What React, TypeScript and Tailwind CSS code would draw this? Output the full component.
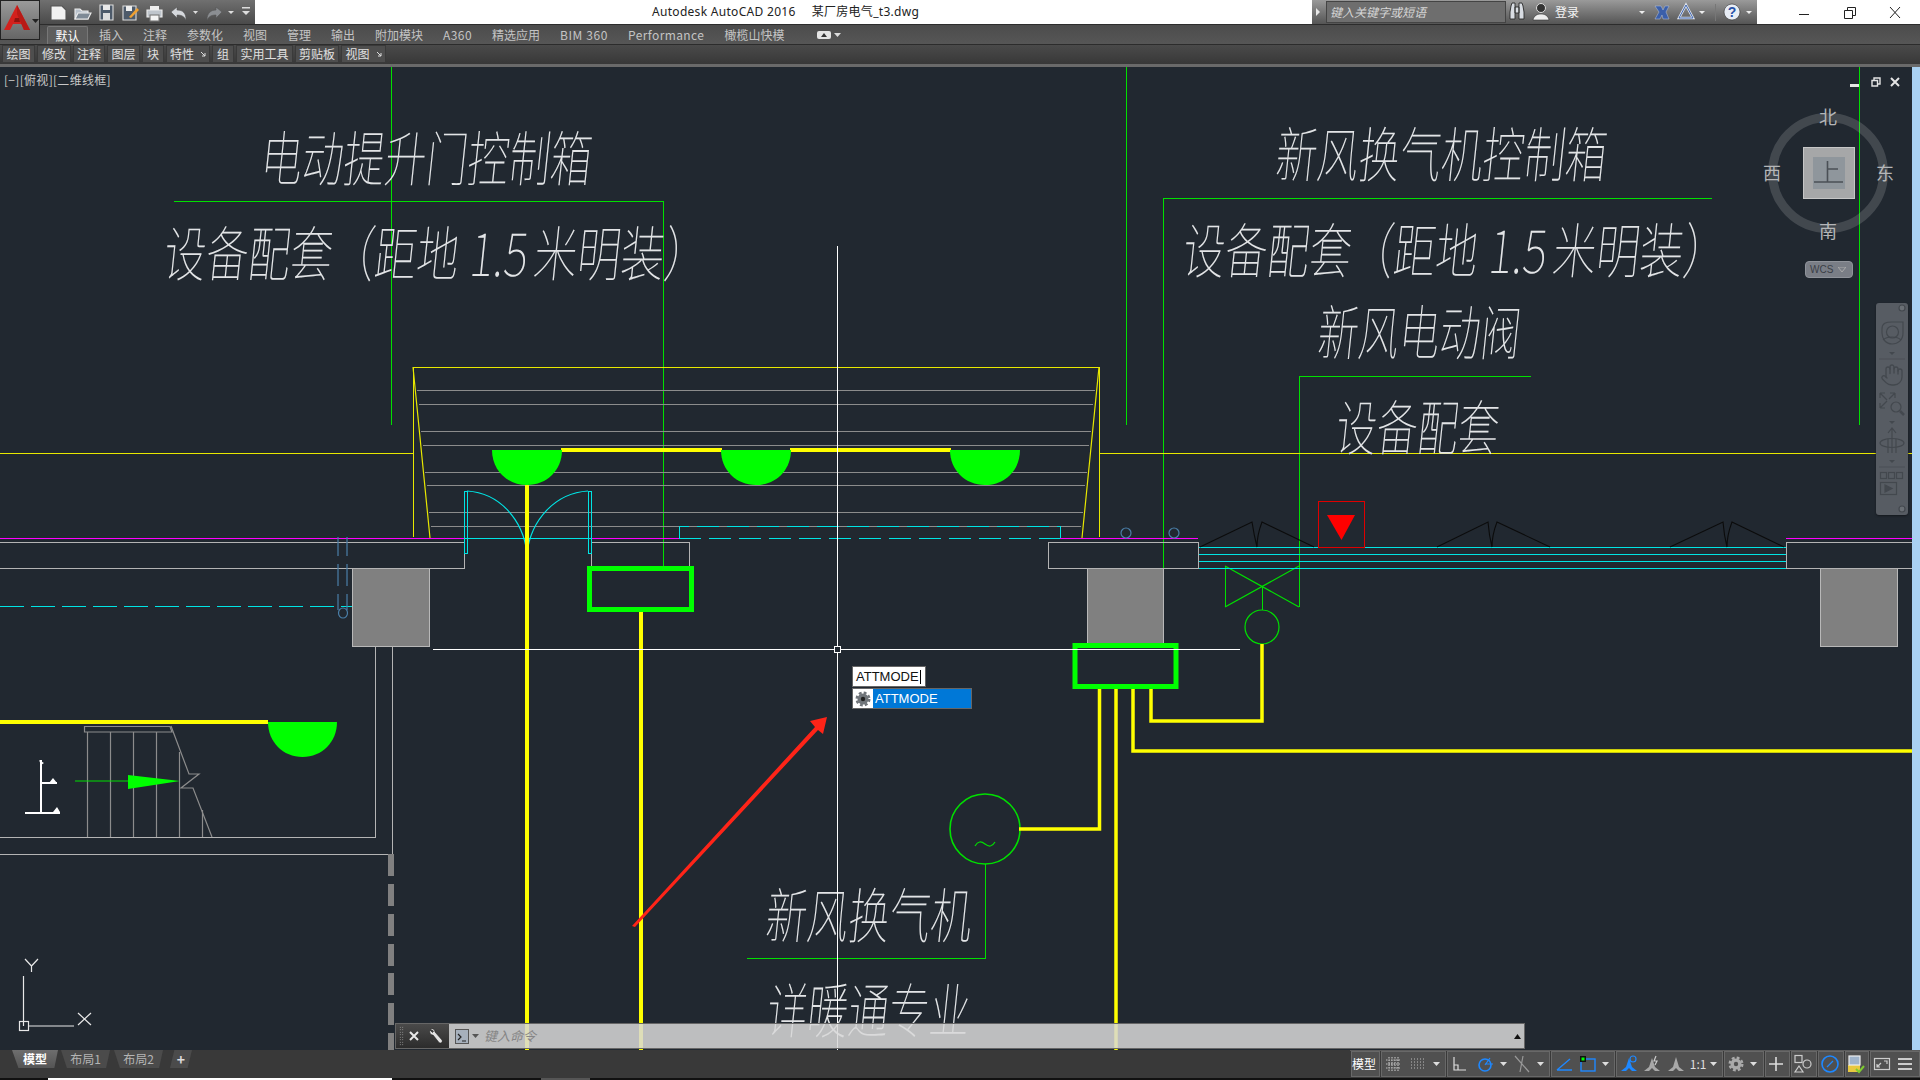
import { Hand } from "lucide-react";

const tabs = [
  { label: "插入" },
  { label: "注释" },
  { label: "参数化" },
  { label: "视图" },
  { label: "管理" },
  { label: "输出" },
  { label: "附加模块" },
  { label: "A360", cls: "tracking-[0.4px]" },
  { label: "精选应用" },
  { label: "BIM 360", cls: "tracking-[0.6px]" },
  { label: "Performance", cls: "tracking-[0.4px]" },
  { label: "橄榄山快模" },
];

const panels = [
  { label: "绘图", w: "w-[33px]" },
  { label: "修改", w: "w-[34px]" },
  { label: "注释", w: "w-[32px]" },
  { label: "图层", w: "w-[33px]" },
  { label: "块", w: "w-[22px]" },
  { label: "特性", w: "w-[44px]", arrow: true },
  { label: "组", w: "w-[22px]" },
  { label: "实用工具", w: "w-[57px]" },
  { label: "剪贴板", w: "w-[44px]" },
  { label: "视图", w: "w-[45px]", arrow: true },
];

const stairY = [390, 404, 431, 445, 472, 485, 512, 526];
const lamps = [492, 721, 950];
const black = [
  [1200, 1252, 1257, 1262, 1314],
  [1437, 1488, 1492, 1497, 1550],
  [1670, 1723, 1727, 1732, 1784],
];
const legDashes = [854, 884, 914, 944, 973, 1003, 1033];

const Caret = ({ color = "#ddd" }: { color?: string }) => (
  <svg width="7" height="4" viewBox="0 0 7 4" className="shrink-0">
    <path d="M0 0h7L3.5 4z" fill={color} />
  </svg>
);

const CadText = ({ x, y, w, size = 60, children }: { x: number; y: number; w: number; size?: number; children: string }) => (
  <text
    transform={`translate(${x} ${y}) skewX(-6)`}
    fontSize={size}
    fontWeight={100}
    fill="#e2e4e6"
    textLength={w}
    lengthAdjust="spacingAndGlyphs"
    fontFamily="'Noto Sans CJK SC', sans-serif"
  >
    {children}
  </text>
);

// 设备配套（距地1.5米明装） spaces the digits wide, so it is set in three runs
const SpecLine = ({ x, y }: { x: number; y: number }) => (
  <>
    <CadText x={x} y={y} w={295}>设备配套（距地</CadText>
    <CadText x={x + 306} y={y} w={58}>1.5</CadText>
    <CadText x={x + 370} y={y} w={174}>米明装）</CadText>
  </>
);

const Wall = ({ x1, x2 }: { x1: number; x2: number }) => (
  <>
    <rect x={x1} y={542} width={x2 - x1} height={26} fill="none" stroke="#b4b4b4" strokeWidth="1" />
    <line x1={Math.max(x1, 0)} x2={x2} y1={538} y2={538} stroke="#ff00ff" strokeWidth="1" />
  </>
);

const Pillar = ({ x, w }: { x: number; w: number }) => (
  <rect x={x} y={568} width={w} height={78} fill="#808080" stroke="#b8b8b8" strokeWidth="1" shapeRendering="crispEdges" />
);

const Drawing = () => (
  <svg width="1912" height="983" viewBox="0 67 1912 983" className="absolute left-0 top-0">
    {/* green leaders */}
    <g stroke="#00e000" strokeWidth="1" fill="none">
      <g shapeRendering="crispEdges">
        <path d="M391 67V425M1126 67V425M1859 67V425" />
        <path d="M174 201H663V568" />
        <path d="M1712 198H1163V646" />
        <path d="M1531 376H1299V607" />
        <path d="M747 958H985V864" />
        <path d="M1262 587V610M1225 566V607" />
      </g>
      <path d="M1225 566L1299 607M1299 566L1225 607" strokeWidth="1.2" />
      <ellipse cx="1262" cy="627" rx="17" ry="17" strokeWidth="1.2" />
      <circle cx="985" cy="829" r="35" strokeWidth="1.6" />
      <path d="M975 846c3-5 6-5 10-2s7 3 10-2" strokeWidth="1.2" />
    </g>

    {/* roller door */}
    <g stroke="#8c8c8c" strokeWidth="1" shapeRendering="crispEdges">
      {stairY.map((y) => {
        const d = ((y - 367) / 171) * 17;
        return <line key={y} x1={415 + d} x2={1097 - d} y1={y} y2={y} />;
      })}
    </g>
    <path d="M413 537V367H1099V537M0 453H413M1099 453H1912" stroke="#e8e800" strokeWidth="1" fill="none" shapeRendering="crispEdges" />
    <path d="M413 367L430 538M1099 367L1082 538" stroke="#e8e800" strokeWidth="1.2" fill="none" />

    {/* window */}
    <path d="M1198 547H1786M1198 554H1786M1198 561H1786M1198 568H1786" stroke="#00e4e4" strokeWidth="1" shapeRendering="crispEdges" />
    {black.map(([a, b, c, d, e]) => (
      <path key={a} d={`M${a} 547L${b} 522Q${c - 3} 535 ${c} 547Q${c} 535 ${d} 522L${e} 547`} fill="none" stroke="#0b0b0b" strokeWidth="1.1" />
    ))}

    <Pillar x={352} w={77} />
    <Pillar x={1087} w={76} />
    <Pillar x={1820} w={77} />
    <g shapeRendering="crispEdges">
      <Wall x1={-4} x2={464} />
      <Wall x1={591} x2={689} />
      <Wall x1={1048} x2={1198} />
      <Wall x1={1786} x2={1920} />
    </g>

    {/* doors */}
    <g stroke="#00e4e4" strokeWidth="1" fill="none">
      <g shapeRendering="crispEdges">
        <path d="M464 538H591M464 491H467V553H464ZM588 491H591V553H588Z" />
        <path d="M679 538V526H1060V538M1049 538H1060" strokeDasharray="22 8" />
        <path d="M679 538H1060" strokeDasharray="22 8" />
        <path d="M0 606H352" strokeDasharray="24 7" />
      </g>
      <path d="M467 491C500 493 523 520 527 553M588 491C555 493 531 520 527 553" strokeWidth="1.2" />
    </g>

    <g stroke="#4a7fa8" strokeWidth="1.2" fill="none">
      <path d="M338 537V556M347 537V556M338 564V586M347 564V586M338 594V610M347 594V610" />
      <ellipse cx="343" cy="613" rx="4.5" ry="5" />
      <ellipse cx="1126" cy="533" rx="5" ry="5" />
      <ellipse cx="1174" cy="533" rx="5" ry="5" />
    </g>

    {/* room outline and stair */}
    <path d="M375 646V837H0M392 646V854H0" stroke="#b4b4b4" strokeWidth="1" fill="none" shapeRendering="crispEdges" />
    {legDashes.map((y) => (
      <rect key={y} x={388} y={y} width={6} height={y === 1033 ? 17 : 22} fill="#808080" />
    ))}
    <g stroke="#8c8c8c" strokeWidth="1.2" fill="none">
      <path d="M84.500 726.500H170L172 732H84.500Z" />
      <path d="M87.500 732V837M110.500 732V837M133.500 732V837M156.500 732V837M179.500 752V837M202.500 810V837" />
      <path d="M171 726L189 774H199L181 788H193L212 837" />
    </g>
    <path d="M75 781H128" stroke="#00e000" strokeWidth="1.2" />
    <path d="M128 775L180 781L128 789Z" fill="#00ff00" />
    <path d="M41 760V813M41 783H57M25 813H60" stroke="#fff" strokeWidth="2" fill="none" />
    <path d="M49 783l4-5 4 5zM53 812l4-5 3 5zM39 760l5 3-3 2z" fill="#fff" />

    {/* electrical */}
    <g stroke="#ffff00" fill="none" strokeWidth="4">
      <path d="M0 722H268M561 450H722M790 450H951" />
      <path d="M527 485V1050M641 612V1050" />
      <path d="M1116 686V1050" strokeWidth="3.500" />
      <path d="M1099.500 686V829H1019" strokeWidth="3.500" />
      <path d="M1133 686V751H1912" strokeWidth="3.500" />
      <path d="M1151 686V721H1262V644" strokeWidth="3.500" />
    </g>
    {lamps.map((x) => (
      <path key={x} d={`M${x} 450H${x + 70}C${x + 70} 470 ${x + 55} 485 ${x + 35} 485C${x + 15} 485 ${x} 470 ${x} 450Z`} fill="#00ff00" />
    ))}
    <path d="M268 722H337C337 742 322 757 302.500 757C283 757 268 742 268 722Z" fill="#00ff00" />
    <rect x="589.500" y="568.500" width="102" height="41" fill="none" stroke="#00ff00" strokeWidth="5" />
    <rect x="1075" y="645.500" width="101" height="41" fill="none" stroke="#00ff00" strokeWidth="5" />

    {/* alarm */}
    <rect x="1318" y="501" width="46" height="46" fill="none" stroke="#e00000" strokeWidth="1" shapeRendering="crispEdges" />
    <path d="M1327 515H1355L1341.500 540Z" fill="#ff0000" />

    {/* red arrow */}
    <path d="M632 926L815 727L810 721L827 717L823 734L818 730L635 927Z" fill="#ff2418" />

    <CadText x={259} y={181} w={331}>电动提升门控制箱</CadText>
    <SpecLine x={162} y={276} />
    <CadText x={1274} y={177} w={331}>新风换气机控制箱</CadText>
    <SpecLine x={1181} y={273} />
    <CadText x={1316} y={355} w={203}>新风电动阀</CadText>
    <CadText x={1334} y={450} w={163}>设备配套</CadText>
    <CadText x={764} y={938} w={206}>新风换气机</CadText>
    <CadText x={765} y={1033} w={203}>详暖通专业</CadText>

    {/* crosshair */}
    <path d="M837 246V1050M433 649H1240" stroke="#fff" strokeWidth="1" shapeRendering="crispEdges" />
    <rect x="834" y="646" width="6" height="6" fill="#212830" stroke="#fff" strokeWidth="1" shapeRendering="crispEdges" />

    {/* UCS icon */}
    <g stroke="#e8e8e8" strokeWidth="1.2" fill="none">
      <path d="M23.500 976V1026M29 1026H74" />
      <rect x="19.500" y="1021.500" width="9" height="9" />
      <path d="M78 1013L91 1025M91 1013L78 1025" />
      <path d="M25 959L31.500 966L38 959M31.500 966V972" />
    </g>

    {/* view cube compass */}
    <circle cx="1828" cy="173" r="55.500" fill="none" stroke="#fff" strokeOpacity="0.15" strokeWidth="9" />
    <rect x="1803.500" y="147.500" width="51" height="51" fill="#a6a7a8" stroke="#c6c6c6" />
    <rect x="1813" y="157" width="32" height="32" fill="#8f969c" />
    <path d="M1827.500 161V182M1827.500 169H1838M1814 182H1843" stroke="#4b5056" strokeWidth="1.6" fill="none" />
    <g fontSize="18" fill="#b4b6b8" textAnchor="middle" fontFamily="'Noto Sans CJK SC', sans-serif">
      <text x="1828" y="124">北</text>
      <text x="1828" y="238">南</text>
      <text x="1772" y="180">西</text>
      <text x="1885" y="180">东</text>
    </g>
  </svg>
);

const NavBar = () => (
  <div className="absolute left-[1876px] top-[236px] h-[212px] w-[32px] rounded-[3px] bg-[#575c63] shadow-[0_1px_2px_#15191e]">
    <svg width="32" height="212" viewBox="0 0 32 212" fill="none" stroke="#43484e" strokeWidth="1.2">
      <circle cx="26" cy="5" r="3" fill="#6a6f75" />
      <path d="M6 26C6 20 10 19 16 19H27V30C27 37 22 41 16 41C10 41 6 36 6 30Z" />
      <circle cx="16.500" cy="29" r="6" />
      <path d="M7 37C11 33 21 33 25 37" />
      <path d="M13 49h6l-3 3z" fill="#43484e" stroke="none" />
      <path d="M3 56H29" strokeOpacity="0.5" />
      <Hand x={4} y={60} width={24} height={24} strokeWidth={1.3} stroke="#43484e" />
      <path d="M4 90L11 97M4 90V95M4 90H9M19 90L13 96M19 90V95M19 90H14M4 105L11 98M4 105V100M4 105H9" />
      <circle cx="20" cy="104" r="5" />
      <path d="M24 108L28 112" strokeWidth="2.500" />
      <path d="M13 118h6l-3 3z" fill="#43484e" stroke="none" />
      <path d="M16 125V150M12 130L16 125L20 130M12 136V150M20 136V150" />
      <ellipse cx="16" cy="140" rx="12" ry="4.500" />
      <path d="M13 157h6l-3 3z" fill="#43484e" stroke="none" />
      <path d="M3 164H29" strokeOpacity="0.5" />
      <rect x="4.500" y="169.500" width="6" height="6" />
      <rect x="12.500" y="169.500" width="6" height="6" />
      <rect x="20.500" y="169.500" width="6" height="6" />
      <rect x="4.500" y="179.500" width="16" height="12" />
      <path d="M9 182V189L16 185.500Z" fill="#43484e" />
      <circle cx="26" cy="206" r="3" fill="#6a6f75" />
    </svg>
  </div>
);

const Gear = ({ size, body, core }: { size: number; body: string; core: string }) => (
  <svg width={size} height={size} viewBox="0 0 16 16" className="shrink-0">
    <circle cx="8" cy="8" r="5.500" fill={body} />
    <circle cx="8" cy="8" r="6.300" fill="none" stroke={body} strokeWidth="2.400" strokeDasharray="2.800 2.140" />
    <circle cx="8" cy="8" r="2.200" fill={core} />
  </svg>
);

const Popup = () => (
  <div className="absolute left-[852px] top-[599px] font-['Liberation_Sans',sans-serif] text-[13px]">
    <div className="flex h-[21px] w-[74px] items-center border border-[#666] bg-white pl-[3px] text-[#111]">
      ATTMODE<span className="ml-[1px] h-[14px] w-[1px] bg-black" />
    </div>
    <div className="mt-[1px] flex h-[21px] w-[120px] items-center border border-[#666] bg-[#0078d7] text-white">
      <span className="flex h-full w-[20px] items-center justify-center bg-white">
        <Gear size={16} body="#70757a" core="#222" />
      </span>
      <span className="ml-[2px]">ATTMODE</span>
    </div>
  </div>
);

const CommandLine = () => (
  <div className="absolute left-[395px] top-[956px] flex h-[26px] w-[1130px] border border-[#666]">
    <div className="flex w-[53px] items-center bg-gradient-to-b from-[#4a4a4a] to-[#2c2c2c]">
      <span className="ml-[3px] h-[20px] w-[5px] bg-[radial-gradient(#aaa_40%,transparent_45%)] bg-[length:2.500px_2.500px]" />
      <svg width="12" height="12" viewBox="0 0 12 12" className="ml-[4px]">
        <path d="M2 2L10 10M10 2L2 10" stroke="#e8e8e8" strokeWidth="2" />
      </svg>
      <svg width="16" height="18" viewBox="0 0 16 18" className="ml-[8px]">
        <path d="M2 2C4 1 7 2 7 5L14 13C15 15 13 17 11 15.500L5 8C3 8 1 6 2 3L4.500 5.500L5.500 4Z" fill="#e4e4e4" stroke="#222" strokeWidth="0.6" />
      </svg>
    </div>
    <div className="flex flex-1 items-center bg-[#d8d8d8]/85">
      <span className="ml-[6px] flex h-[15px] w-[14px] items-end border border-[#555] bg-[#a6b0bc] pb-[1px] pl-[1px]">
        <svg width="10" height="10" viewBox="0 0 10 10">
          <path d="M1 2L4 5L1 8M5 9H9" stroke="#222" fill="none" strokeWidth="1.2" />
        </svg>
      </span>
      <span className="ml-[3px]"><Caret color="#555" /></span>
      <span className="ml-[5px] text-[13px] italic text-[#858585]">键入命令</span>
      <span className="ml-auto mr-[3px]">
        <svg width="7" height="5" viewBox="0 0 7 5"><path d="M3.500 0L7 5H0z" fill="#111" /></svg>
      </span>
    </div>
  </div>
);

const Qat = () => (
  <div className="flex h-[24px] w-[255px] items-center bg-gradient-to-b from-[#707070] to-[#4a4a4a] pl-[49px]">
    <svg width="206" height="24" viewBox="49 0 206 24" strokeWidth="1.1">
      <path d="M51 6H62L66 10V20H51Z" fill="#f2f2f2" stroke="#555" />
      <path d="M75 9H80L82 11H88V19H75Z" fill="#b9c2cc" stroke="#eee" />
      <path d="M78 13H91L88 19H75Z" fill="#7e8a96" stroke="#eee" />
      <path d="M100 5H113V20H100Z" fill="#4d5a6a" stroke="#ddd" />
      <rect x="103" y="5" width="7" height="5" fill="#e8e8e8" />
      <rect x="103" y="13" width="7" height="7" fill="#ddd" />
      <path d="M123 6H136V20H123Z" fill="#4d5a6a" stroke="#ddd" />
      <rect x="126" y="6" width="6" height="5" fill="#eee" />
      <path d="M129 17L137 8L139 10L131 18Z" fill="#f0a030" />
      <rect x="150" y="6" width="9" height="5" fill="#eee" />
      <path d="M147 10H162V17H147Z" fill="#bfc5cc" stroke="#eee" />
      <rect x="150" y="15" width="9" height="6" fill="#f4f4f4" stroke="#777" />
      <path d="M171 12L177 7V10C183 10 186 13 186 20C184 16 181 15 177 15V18Z" fill="#d5d8dc" stroke="#555" strokeWidth="0.6" />
      <path d="M193 11H198L195.500 14Z" fill="#ddd" />
      <path d="M222 12L216 7V10C211 10 207 13 207 20C209 16 212 15 216 15V18Z" fill="#8b8e92" stroke="#555" strokeWidth="0.6" />
      <path d="M228 11H234L231 14Z" fill="#ddd" />
      <path d="M242 7H250V8.500H242ZM242 11H250L246 15Z" fill="#ddd" />
    </svg>
  </div>
);

const AppButton = () => (
  <div className="absolute left-0 top-0 z-10 h-[40px] w-[40px] border border-[#222] bg-gradient-to-b from-[#9a9a9a] to-[#666]">
    <svg width="38" height="38" viewBox="0 0 38 38">
      <path d="M16 4L29 29H23L20.500 23H12L9 29H3Z" fill="#d3211d" />
      <path d="M16 4L29 29H23L16 13Z" fill="#b81a16" />
      <path d="M14 17L18 17L19 21H13Z" fill="#8e1410" />
      <path d="M31 18H38L34.500 22Z" fill="#222" />
    </svg>
  </div>
);

const InfoCenter = () => (
  <div className="flex h-[24px] w-[445px] items-center bg-gradient-to-b from-[#9a9a9a] to-[#555]">
    <svg width="14" height="10" viewBox="0 0 14 10" className="shrink-0">
      <path d="M4 1L8 5L4 9Z" fill="#e8e8e8" />
    </svg>
    <div className="flex h-[22px] w-[180px] items-center border border-[#444] bg-[#6e6e6e] pl-[3px] text-[12px] italic text-[#d6d6d6]">
      键入关键字或短语
    </div>
    <svg width="251" height="24" viewBox="1506 0 251 24">
      <path d="M1510 12L1511 6L1512 3H1515V19H1510ZM1519 3H1522L1523 6L1524 12V19H1519ZM1515 7H1519V13H1515Z" fill="#d8dce2" stroke="#2a2a2a" strokeWidth="0.9" />
      <circle cx="1541" cy="8" r="4.500" fill="#333" stroke="#ddd" />
      <path d="M1533 20C1534 15 1538 14 1541 14C1544 14 1548 15 1549 20Z" fill="#eee" stroke="#333" strokeWidth="0.6" />
      <path d="M1639 11H1645L1642 14Z" fill="#eee" />
      <path d="M1655 6H1661L1663 10L1665 6H1669L1666 12L1669 19H1663L1662 15L1660 19H1655L1659 12Z" fill="#3a5faa" stroke="#b8c4de" strokeWidth="0.5" />
      <path d="M1686 5L1693 18H1679Z" fill="none" stroke="#dfe5ef" strokeWidth="2.500" />
      <path d="M1686 5L1693 18H1679Z" fill="none" stroke="#2f58a8" strokeWidth="0.9" />
      <path d="M1699 11H1705L1702 14Z" fill="#eee" />
      <path d="M1715.500 4V21" stroke="#777" />
      <circle cx="1732" cy="12" r="8" fill="#e8edf5" stroke="#333" strokeWidth="0.6" />
      <text x="1732" y="17" fontSize="14" fontWeight="700" fill="#2a52a8" textAnchor="middle" fontFamily="'Liberation Sans', sans-serif">?</text>
      <path d="M1746 11H1752L1749 14Z" fill="#eee" />
      <text x="1555" y="16.500" fontSize="12" fill="#f4f4f4" fontFamily="'Noto Sans CJK SC', sans-serif">登录</text>
    </svg>
  </div>
);

const WindowButtons = () => (
  <div className="flex h-[24px] w-[163px] items-center">
    <svg width="163" height="24" viewBox="1757 0 163 24" fill="none" stroke="#222" strokeWidth="1">
      <path d="M1799 14.500H1809" />
      <path d="M1844.500 10.500H1852.500V18.500H1844.500ZM1847.500 10V7.500H1855.500V15.500H1853" />
      <path d="M1890 7L1900 18M1900 7L1890 18" />
    </svg>
  </div>
);

const Icon = ({ children, w = 20 }: { children: React.ReactNode; w?: number }) => (
  <svg width={w} height="20" viewBox={`0 0 ${w} 20`} fill="none" strokeWidth="1.2" className="shrink-0">
    {children}
  </svg>
);

const Group = ({ w, children }: { w: string; children: React.ReactNode }) => (
  <div className={`flex h-full shrink-0 items-center justify-around border border-[#686868] bg-[#505050] pr-[3px] ${w}`}>{children}</div>
);

const StatusBar = () => (
  <div className="ml-auto flex h-[27px] items-start gap-[1px] border-t border-[#5c5c5c] pl-[1px]">
    <Group w="w-[29px]">
      <span className="whitespace-nowrap text-[12px] text-white">模型</span>
    </Group>
    <Group w="w-[65px]">
      <Icon><path d="M5 3V17M8 3V17M11 3V17M14 3V17M2 6H17M2 10H17M2 14H17" stroke="#bbb" strokeDasharray="1.500 1" /></Icon>
      <Icon><path d="M3 5H17M3 8H17M3 11H17M3 14H17" stroke="#bbb" strokeDasharray="1 2" /></Icon>
      <Caret />
    </Group>
    <Group w="w-[103px]">
      <Icon><path d="M4 3V16H16M4 11H8V16" stroke="#ddd" /></Icon>
      <Icon><circle cx="10" cy="11" r="6" stroke="#1e88ff" strokeWidth="1.6" /><path d="M10 11L15 4M10 10H18" stroke="#1e88ff" /></Icon>
      <Caret />
      <Icon><path d="M3 2L17 18M11 2L8 18" stroke="#999" /></Icon>
      <Caret />
    </Group>
    <Group w="w-[64px]">
      <Icon><path d="M3 16L16 5M3 16H18" stroke="#1e88ff" strokeWidth="1.4" /></Icon>
      <Icon><rect x="3" y="5" width="14" height="12" stroke="#1e88ff" strokeWidth="1.4" /><rect x="2" y="2" width="6" height="6" fill="#111" /><rect x="3.500" y="3.500" width="3" height="3" fill="#00ff00" /></Icon>
      <Caret />
    </Group>
    <Group w="w-[107px]">
      <Icon><path d="M10 4L13 13L18 17H13L10 14L7 17H2L7 13Z" fill="#1e88ff" /><circle cx="14" cy="5" r="3" stroke="#1e88ff" /></Icon>
      <Icon><path d="M10 4L13 13L18 17H13L10 14L7 17H2L7 13Z" fill="#a8a8a8" /><path d="M14 2L12 7H15L13 11" stroke="#ccc" /></Icon>
      <Icon><path d="M10 3L13 13L18 17H13L10 14L7 17H2L7 13Z" fill="#a8a8a8" /></Icon>
      <span className="text-[12px] text-[#ddd]">1:1</span>
      <Caret />
    </Group>
    <Group w="w-[40px]">
      <Gear size={16} body="#aaa" core="#505050" />
      <Caret />
    </Group>
    <Group w="w-[25px]">
      <Icon><path d="M10 3V17M3 10H17" stroke="#ddd" strokeWidth="1.6" /></Icon>
    </Group>
    <Group w="w-[26px]">
      <Icon><rect x="2" y="1.500" width="7" height="7" stroke="#ccc" /><circle cx="14" cy="10" r="4" stroke="#ccc" /><path d="M6 12L10 18H2Z" stroke="#ccc" /></Icon>
    </Group>
    <Group w="w-[26px]">
      <Icon><circle cx="10" cy="10" r="8" stroke="#1e88ff" strokeWidth="1.6" /><path d="M7 13L13 7" stroke="#1e88ff" /></Icon>
    </Group>
    <Group w="w-[24px]">
      <Icon><rect x="2" y="11" width="12" height="7" fill="#e8c840" /><rect x="3" y="2" width="11" height="9" fill="#9fb4cc" stroke="#eee" /><path d="M10 15L13 18L18 12" stroke="#7fcc30" strokeWidth="2" /></Icon>
    </Group>
    <Group w="w-[50px]">
      <Icon><rect x="2.500" y="4.500" width="15" height="11" stroke="#ccc" /><path d="M5 13L9 9M12 7H15V10M5 10V13H8" stroke="#ccc" /></Icon>
      <Icon><path d="M3 5H17M3 10H17M3 15H17" stroke="#ccc" strokeWidth="1.8" /></Icon>
    </Group>
  </div>
);

const LayoutTabs = () => (
  <div className="flex h-[18px] items-stretch pl-[12px] text-[12px]">
    <div className="flex w-[46px] items-center justify-center bg-gradient-to-b from-[#6e6e6e] to-[#555] font-bold text-white [clip-path:polygon(0_0,100%_0,92%_100%,14%_100%)]">模型</div>
    <div className="ml-[3px] flex w-[49px] items-center justify-center bg-[#4b4b4b] text-[#b4b4b4] [clip-path:polygon(0_0,100%_0,92%_100%,12%_100%)]">布局1</div>
    <div className="ml-[4px] flex w-[49px] items-center justify-center bg-[#4b4b4b] text-[#b4b4b4] [clip-path:polygon(0_0,100%_0,92%_100%,12%_100%)]">布局2</div>
    <div className="ml-[7px] flex w-[22px] items-center justify-center bg-[#4b4b4b] text-[14px] font-bold text-[#ddd] [clip-path:polygon(20%_0,100%_0,80%_100%,0_100%)]">+</div>
  </div>
);

export default function App() {
  return (
    <div className="flex h-[1080px] w-[1920px] flex-col overflow-hidden bg-[#212830] font-['Noto_Sans_CJK_SC','Noto_Sans',sans-serif]">
      {/* title bar */}
      <div className="relative flex h-[24px] shrink-0 bg-white">
        <AppButton />
        <Qat />
        <div className="ml-[397px] flex w-[660px] items-center gap-[16px] whitespace-nowrap font-['Noto_Sans','Noto_Sans_CJK_SC',sans-serif] text-[12px] tracking-[0.3px] text-[#222]">
          <span>Autodesk AutoCAD 2016</span>
          <span>某厂房电气_t3.dwg</span>
        </div>
        <InfoCenter />
        <WindowButtons />
      </div>

      {/* ribbon tabs */}
      <div className="flex h-[21px] shrink-0 items-end border-y border-[#2c2c2c] bg-gradient-to-b from-[#4c4c4c] to-[#565656] pl-[47px] text-[12px] text-[#c4c4c4]">
        <div className="mr-[1px] flex h-[18px] w-[41px] items-center justify-center rounded-t-[2px] border-x border-t border-[#777] bg-[#5e5e5e] text-white">默认</div>
        {tabs.map((t) => (
          <div key={t.label} className={`flex h-[18px] items-center whitespace-nowrap px-[10px] ${t.cls ?? ""}`}>{t.label}</div>
        ))}
        <div className="ml-[23px] flex h-[18px] items-center gap-[3px]">
          <svg width="14" height="8" viewBox="0 0 14 8">
            <rect width="14" height="8" rx="2" fill="#e4e4e4" />
            <path d="M7 2L10 6H4Z" fill="#333" />
          </svg>
          <Caret />
        </div>
      </div>

      {/* ribbon panels */}
      <div className="flex h-[19px] shrink-0 items-start gap-[2px] bg-gradient-to-b from-[#4a4a4a] to-[#383838] pl-[2px] text-[12px] text-[#e0e0e0]">
        {panels.map((p) => (
          <div key={p.label + p.w} className={`flex h-[18px] items-center justify-center gap-[6px] border border-[#3a3a3a] bg-[#4e4e4e] ${p.w}`}>
            {p.label}
            {p.arrow && (
              <svg width="6" height="6" viewBox="0 0 6 6">
                <path d="M1 1L5 5M5 2V5H2" stroke="#ddd" fill="none" />
              </svg>
            )}
          </div>
        ))}
      </div>
      <div className="h-[3px] shrink-0 bg-[#6a6a6a]" />

      {/* model space */}
      <div className="relative flex-1">
        <Drawing />
        <div className="absolute right-0 top-0 h-full w-[8px] bg-[#a9d1f2]" />
        <div className="absolute left-[4px] top-[4px] text-[12px] tracking-[0.3px] text-[#c8c8c8]">[−][俯视][二维线框]</div>
        <div className="absolute left-[1850px] top-[10px] flex items-center">
          <span className="mt-[6px] h-[3px] w-[9px] bg-[#e4e4e4]" />
          <svg width="10" height="10" viewBox="0 0 10 10" className="ml-[12px]">
            <path d="M1 3.500H6.500V9H1ZM3 3V1H9V7H7" stroke="#e4e4e4" strokeWidth="1.400" fill="none" />
          </svg>
          <svg width="10" height="10" viewBox="0 0 10 10" className="ml-[9px]">
            <path d="M1 1L9 9M9 1L1 9" stroke="#e4e4e4" strokeWidth="2" />
          </svg>
        </div>
        <div className="absolute left-[1805px] top-[194px] flex h-[17px] w-[48px] items-center gap-[5px] rounded-[4px] border border-[#8f939a] bg-[#7a7e86] pl-[4px] font-['Liberation_Sans',sans-serif] text-[10px] text-[#3a3f46]">
          WCS
          <svg width="8" height="5" viewBox="0 0 8 5"><path d="M0 0H8L4 5Z" fill="none" stroke="#aaa" /></svg>
        </div>
        <NavBar />
        <Popup />
        <CommandLine />
      </div>

      {/* bottom */}
      <div className="flex h-[28px] shrink-0 items-start bg-[#393939]">
        <LayoutTabs />
        <StatusBar />
      </div>
      <div className="flex h-[2px] shrink-0 bg-[#111]">
        <div className="ml-[48px] w-[344px] bg-white" />
        <div className="ml-[149px] w-[49px] bg-[#555]" />
      </div>
    </div>
  );
}
